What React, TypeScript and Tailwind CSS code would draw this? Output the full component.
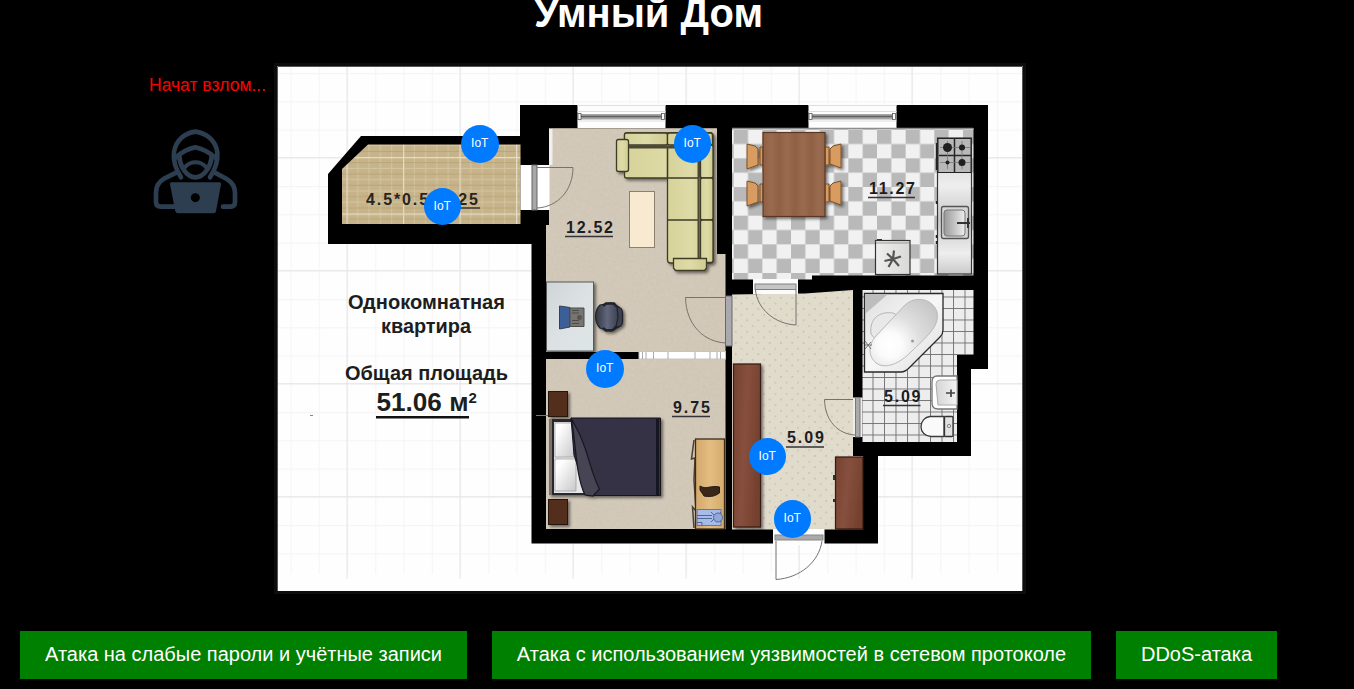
import type { ReactNode } from "react";

const BLACK = "#000";

const devices = [
  { id: 1, place: "left-[184px] top-[59px]" },
  { id: 2, place: "left-[146.5px] top-[121.5px]" },
  { id: 3, place: "left-[396.5px] top-[59px]" },
  { id: 4, place: "left-[309px] top-[284px]" },
  { id: 5, place: "left-[471.5px] top-[371.5px]" },
  { id: 6, place: "left-[496.5px] top-[434px]" },
];

const attacks = [
  { label: "Атака на слабые пароли и учётные записи", width: "w-[447px]" },
  { label: "Атака с использованием уязвимостей в сетевом протоколе", width: "w-[599px]" },
  { label: "DDoS-атака", width: "w-[161px]" },
];

function HackerIcon() {
  return (
    <svg className="block h-[87px] w-[85px]" viewBox="69 209 255 261" fill="none" stroke="#2c3e50" strokeWidth="14" strokeLinecap="round">
      <path d="M153 354C140 334 129 304 132 279C137 241 166 221 196 217C227 221 257 241 262 279C264 304 253 334 240 354" />
      <path d="M136 296C151 282 171 269 196 264C221 269 241 282 257 296" />
      <path d="M148 290C150 322 170 354 196 354C222 354 243 322 245 290" />
      <path d="M164 324C182 304 211 304 229 324" strokeWidth="12" />
      <path d="M140 339L104 357C87 367 78 380 78 398V428Q78 442 92 442H138" />
      <path d="M253 339L289 358C306 368 315 381 315 400V428Q315 442 302 442H279" />
      <path d="M124 369H269Q274 369 273 375L258 456Q257 462 251 462H143Q137 462 136 456L120 375Q119 369 124 369Z" fill="#2c3e50" stroke="none" />
      <circle cx="196" cy="415" r="13.5" fill={BLACK} stroke="none" />
    </svg>
  );
}

function Area({ x, y, w, children }: { x: number; y: number; w: number; children: ReactNode }) {
  return (
    <g>
      <text x={x} y={y} textLength={w} fontSize="16" fontWeight="700" fill="#1c1c22">{children}</text>
      <path d={`M${x - 1} ${y + 4}h${w + 1}`} stroke="#333338" strokeWidth="1.7" />
    </g>
  );
}

function Windows() {
  return (
    <g>
      {[577.5, 808.5].map((x) => (
        <g key={x}>
          <rect x={x} y="104" width="88" height="24" fill="#fdfdfd" />
          <path d={`M${x} 105.5h88M${x} 111.5h88M${x} 121h88`} stroke="#dedede" strokeWidth="1" />
          <rect x={x + 3} y="114" width="82" height="5.5" fill="#a5a5a5" />
          <path d={`M${x + 3} 116.5h82`} stroke="#606060" strokeWidth="1.5" />
          <rect x={x + 0.5} y="113.5" width="3" height="6" fill="#fff" stroke="#555" strokeWidth="0.8" />
          <rect x={x + 84} y="113.5" width="3" height="6" fill="#fff" stroke="#555" strokeWidth="0.8" />
        </g>
      ))}
    </g>
  );
}

function Doors() {
  return (
    <g fill="none" stroke="#77736c" strokeWidth="1">
      <rect x="520.5" y="165" width="29" height="45" fill="#fff" stroke="none" />
      <rect x="532" y="165" width="5" height="45" fill="#a8a8a8" stroke="#666" />
      <path d="M537 167.5H573C573 190 558 207 537 208" />
      <rect x="725.5" y="296" width="6.5" height="50" fill="#a9a9ae" stroke="#68686c" />
      <path d="M726 297.5H685.5C686 325 704 342 726 343" />
      <rect x="753" y="279" width="45" height="15" fill="#fbfbfb" stroke="none" />
      <rect x="755" y="284" width="41" height="5.5" fill="#c5c5c5" stroke="#808080" />
      <path d="M796 290V325C774 324 757 308 755.5 290" />
      <rect x="853" y="397.5" width="9.5" height="39.5" fill="#ededed" stroke="none" />
      <rect x="855.5" y="397.5" width="4.5" height="39.5" fill="#aaa" stroke="#777" />
      <path d="M853 399.5H824.5C825 421 838 434 855 435" />
      <rect x="773" y="529" width="51.5" height="16" fill="#fdfdfd" stroke="none" />
      <rect x="775" y="535" width="48" height="5" fill="#a9a9a9" stroke="#888" />
      <path d="M776 541V579.5C800 578 819 562 822 541" />
      <rect x="639" y="351.5" width="86.5" height="7.5" fill="#fff" stroke="#c8c4bd" />
      <path d="M642.5 352v7M646 352v7M653.5 352v7M668 352v7M695 352v7M710 352v7M717 352v7M720.5 352v7" stroke="#aaa" />
    </g>
  );
}

function Sofa() {
  return (
    <g fill="url(#sofa)" stroke="#3e3c27" strokeWidth="1.3" filter="url(#drop)">
      <rect x="624.5" y="133" width="88" height="45" rx="2" />
      <rect x="667.5" y="133" width="45.5" height="130" rx="3" />
      <path d="M667.5 133V178M667.5 178H713M667.5 220H713" fill="none" />
      <path d="M627 147H699V258" fill="none" strokeWidth="3" stroke="#4b4835" />
      <path d="M700 178V262M629 145H700" fill="none" stroke="#858060" />
      <rect x="624.5" y="133" width="43" height="12" rx="2" />
      <rect x="667.5" y="133" width="45" height="12" rx="2" />
      <rect x="700.5" y="145" width="12.5" height="33" rx="2" />
      <rect x="700.5" y="178" width="12.5" height="42" rx="2" />
      <rect x="700.5" y="220" width="12.5" height="42.5" rx="2" />
      <rect x="616.5" y="139.5" width="12" height="32" rx="2" />
      <path d="M673.5 258.5H706.5V268L704.5 270.5H675.5L673.5 268Z" />
    </g>
  );
}

function Office() {
  return (
    <g>
      <rect x="629.5" y="191.5" width="25" height="56" fill="#f7ead0" stroke="#8a8172" />
      <g filter="url(#drop)">
        <rect x="546.5" y="282" width="47" height="69" fill="url(#desk)" stroke="#565a5a" />
      </g>
      <path d="M559.5 306L570 307.5V327L559.5 329Z" fill="#3d5f98" stroke="#36424e" />
      <path d="M570 308H584V326.5H570Z" fill="#777572" stroke="#4e4d4b" />
      <path d="M572 310.5h7M572 313h7M572 320.5h7M572 323.5h7" stroke="#4c4c4b" />
      <circle cx="579.5" cy="317.5" r="2.5" fill="#575652" />
      <g filter="url(#drop)" stroke="#20232c" strokeWidth="1.2">
        <path d="M600 305L611 303L619 307V327L611 331L600 328C594 322 594 311 600 305Z" fill="url(#chair)" />
        <path d="M603 306L606 303.5H614L617 307M603 328L606 330.5L613 330L617 326" fill="none" strokeWidth="2.5" />
        <path d="M617 307C621 307 622.5 310 622.5 313V322C622.5 325 620 327 616 327L618 317Z" fill="#3c4150" />
      </g>
    </g>
  );
}

function Bedroom() {
  return (
    <g>
      <g fill="#532f1e" stroke="#281309" filter="url(#drop)">
        <rect x="548.5" y="391.5" width="19" height="25" />
        <rect x="548.5" y="499.5" width="19" height="25" />
      </g>
      <path d="M536 415.5h12" stroke="#777" />
      <g filter="url(#drop)">
        <rect x="549" y="419" width="112" height="76" fill="#29262f" />
        <rect x="549" y="419" width="3" height="76" fill="#77736b" />
        <rect x="554" y="422" width="34" height="71" fill="#e7e7e8" />
        <path d="M555 423H574V457H555Z" fill="url(#pillow)" stroke="#999" strokeWidth="0.7" />
        <path d="M555 459H576V491H555Z" fill="url(#pillow)" stroke="#999" strokeWidth="0.7" />
        <path d="M571 418H660.5V495.5H587L574 455Z" fill="#343244" stroke="#15131d" />
        <path d="M657.5 419V495" stroke="#191721" strokeWidth="3" />
        <path d="M571 418C576 438 575 475 585 495L593 496L599.5 489C591 474 588 450 578 431Z" fill="#464452" stroke="#191821" strokeWidth="1.2" />
      </g>
      <path d="M694 440L691.5 459L695 458L694 480L696 511L692.5 507L694 528" fill="none" stroke="#4a4030" strokeWidth="1.5" />
      <rect x="695.5" y="439" width="29" height="90" fill="url(#lightwood)" stroke="#3b2c18" strokeWidth="1.3" />
      <path d="M700 486C706 490 711 485 719.5 487V493C714 497 709 497 704 496L700 490Z" fill="#39281a" stroke="#241a11" />
      <rect x="697" y="509.5" width="24" height="16" fill="#a7bbeb" stroke="#6177a5" />
      <path d="M697 515.5H712M697 518.5H712M711 512L721 522M711 522L721 512M697 522.5H702V526" fill="none" stroke="#526792" />
      <circle cx="718" cy="517.5" r="4.5" fill="#91a8db" stroke="#526792" />
    </g>
  );
}

function Kitchen() {
  return (
    <g>
      <path d="M732 128H973.5V275.5H812V279.5H732Z" fill="url(#checker)" />
      <path d="M732 128.5H973" stroke="#8e8e8e" strokeWidth="1.5" />
      <g fill="#d89b60" stroke="#7a5028" filter="url(#drop)">
        {[144, 181].map((y) => (
          <g key={y}>
            <path d={`M747 ${y}L755 ${y + 2}L758 ${y + 5}V${y + 21}L747 ${y + 25}Z`} />
            <path d={`M760 ${y + 3}h3v18h-3Z`} />
            <path d={`M841 ${y}L833 ${y + 2}L830 ${y + 5}V${y + 20}L841 ${y + 24}Z`} />
            <path d={`M825 ${y + 3}h4v18h-4Z`} />
          </g>
        ))}
        <rect x="763" y="132.5" width="62" height="84" fill="url(#table)" stroke="#583722" strokeWidth="1.2" />
      </g>
      <rect x="937.5" y="138" width="34" height="136" fill="url(#steel)" stroke="#353535" strokeWidth="1.2" />
      <rect x="938" y="138.5" width="33" height="34" fill="#b8b8b8" stroke="#222" />
      <path d="M954.5 139v33M939 155.5h32" stroke="#252525" strokeWidth="1.5" />
      <path d="M940 147.5h30M940 162.5h30M947.5 141v28M962 141v28" stroke="#777" strokeWidth="0.8" />
      <g fill="#202020">
        <circle cx="947.5" cy="147.5" r="4.5" />
        <circle cx="962" cy="147.5" r="3" />
        <circle cx="947.5" cy="162.5" r="2" />
        <circle cx="962" cy="162.5" r="3.5" />
      </g>
      <rect x="941.5" y="206.5" width="27" height="32" rx="2" fill="#d5d5d5" stroke="#555" strokeWidth="1.3" />
      <rect x="944" y="210" width="21" height="26" rx="3" fill="url(#sink)" stroke="#777" />
      <path d="M957 223H970M968 218V228" stroke="#333" strokeWidth="2" />
      <path d="M936.5 143v27M936.5 201v3M936.5 235v3M936.5 241v3" stroke="#222" strokeWidth="1.5" />
      <rect x="875.5" y="240.5" width="34.5" height="34" fill="url(#fridge)" stroke="#333" strokeWidth="1.2" />
      <path d="M876 243h33" stroke="#999" />
      <path d="M877 239.5h5" stroke="#333" />
      <path d="M893 259L894 250.500M893 259L901 256.500M893 259L899 266M893 259L888.500 267M893 259L884.500 261M893 259L887 253.500" stroke="#555" strokeWidth="2.200" />
    </g>
  );
}

function Bathroom() {
  return (
    <g>
      <path d="M862.5 290H973.5V355H957V442H862.5Z" fill="url(#tiles)" />
      <path d="M864.5 293.5H943V330Q943 334 940 337L909 368Q905 372 901 372H864.5Z" fill="url(#bath)" stroke="#292929" strokeWidth="1.3" />
      <path d="M865 294H888L865 314Z" fill="#bdbdbd" />
      <path d="M871 334C869 318 880 311 893 313L901 317L876 340Z" fill="#e8e8e8" stroke="#b5b5b5" />
      <path d="M876 336L905 305C916 295 933 299 937 312C940 327 926 337 911 352C900 363 886 370 876 363C868 356 868 345 876 336Z" fill="url(#basin)" stroke="#b9b9b9" />
      <circle cx="912.5" cy="341" r="1.5" fill="#999" />
      <path d="M865 341l6 8M865 349l6-7M865 345h7" stroke="#666" strokeWidth="0.9" />
      <path d="M957 376H937Q932 376 932 382V403Q932 409 938 409H957Z" fill="#fff" stroke="#777" strokeWidth="1.3" />
      <path d="M957 380H940Q936 380 936 384L938 405H957Z" fill="url(#sink2)" stroke="#aaa" />
      <path d="M946 393H955M951 389.5V397" stroke="#444" strokeWidth="1.7" />
      <path d="M944 416.5H930C925 417 921 421 921 427C921 432 925 436 931 436.5H944Z" fill="#fafafa" stroke="#3c3c3c" strokeWidth="1.3" />
      <rect x="944.5" y="416.5" width="8.500" height="20" rx="1" fill="#e2e2e2" stroke="#333" strokeWidth="1.3" />
      <circle cx="949" cy="426" r="1.7" fill="none" stroke="#888" />
    </g>
  );
}

function FloorPlan() {
  return (
    <svg className="block h-full w-full" viewBox="277 66 746 525" fontFamily="'Liberation Sans', Arial, sans-serif">
      <defs>
        <pattern id="minor" x="290.5" y="73" width="28.25" height="28.25" patternUnits="userSpaceOnUse">
          <path d="M0 .5H28.25M.5 0V28.25" stroke="#f5f5f5" strokeWidth="1.2" />
        </pattern>
        <pattern id="major" x="346.5" y="157.2" width="113" height="113" patternUnits="userSpaceOnUse">
          <path d="M0 .5H113M.5 0V113" stroke="#e5e5e5" strokeWidth="1" />
        </pattern>
        <pattern id="balcony" x="346.5" y="157" width="56.5" height="56.5" patternUnits="userSpaceOnUse">
          <rect width="56.5" height="56.5" fill="#c8b48a" />
          <path d="M0 11.3H56.5M0 22.6H56.5M0 33.9H56.5M0 45.2H56.5M11.3 0V56.5M22.6 0V56.5M33.9 0V56.5M45.2 0V56.5" stroke="#d5c7a3" strokeWidth="1" />
          <path d="M0 5.6H56.5M0 17H56.5M0 28.2H56.5M0 39.5H56.5M0 51H56.5" stroke="#b7a070" strokeWidth="0.8" />
          <path d="M0 .5H56.5M.5 0V56.5" stroke="#e8dfc9" strokeWidth="1.5" />
        </pattern>
        <pattern id="checker" x="733.7" y="129.7" width="28.66" height="28.66" patternUnits="userSpaceOnUse">
          <rect width="28.66" height="28.66" fill="#f1f1f1" />
          <path d="M0 0H14.33V14.33H0ZM14.33 14.33H28.66V28.66H14.33Z" fill="#b9b9b9" />
        </pattern>
        <pattern id="dots" x="733" y="295" width="11.3" height="11.3" patternUnits="userSpaceOnUse">
          <rect width="11.3" height="11.3" fill="#e1dbcc" />
          <path d="M2 2h1.500v1.500H2zM7.700 7.700h1.500v1.500H7.700z" fill="#c3bcac" />
        </pattern>
        <pattern id="tiles" x="872.5" y="296.5" width="11.5" height="11.5" patternUnits="userSpaceOnUse">
          <rect width="11.5" height="11.5" fill="#ededed" />
          <path d="M0 .5H11.500M.5 0V11.500" stroke="#6c6c6c" strokeWidth="0.9" />
        </pattern>
        <linearGradient id="sofa"><stop stopColor="#d6d299" /><stop offset="0.5" stopColor="#dfdba7" /><stop offset="1" stopColor="#d0cb91" /></linearGradient>
        <linearGradient id="desk" x2="1" y2="1"><stop stopColor="#cfd4d6" /><stop offset="0.5" stopColor="#dce2e4" /><stop offset="1" stopColor="#dee5e6" /></linearGradient>
        <linearGradient id="chair"><stop stopColor="#313542" /><stop offset="0.5" stopColor="#61677a" /><stop offset="1" stopColor="#383d4d" /></linearGradient>
        <linearGradient id="pillow" x2="1" y2="1"><stop offset="0.2" stopColor="#fff" /><stop offset="1" stopColor="#c8c8ca" /></linearGradient>
        <linearGradient id="lightwood"><stop stopColor="#d4a86c" /><stop offset="0.5" stopColor="#e3bd82" /><stop offset="1" stopColor="#d5aa6d" /></linearGradient>
        <linearGradient id="wood" x2="1" y2="0.300"><stop stopColor="#74412f" /><stop offset="0.5" stopColor="#87503e" /><stop offset="1" stopColor="#75412f" /></linearGradient>
        <linearGradient id="table" x1="763" x2="771" y1="0" y2="0" gradientUnits="userSpaceOnUse" spreadMethod="reflect"><stop stopColor="#8f6045" /><stop offset="1" stopColor="#9b6b50" /></linearGradient>
        <linearGradient id="steel" x2="0" y2="1"><stop stopColor="#c8c8c8" /><stop offset="0.35" stopColor="#eee" /><stop offset="0.6" stopColor="#c8c8c8" /><stop offset="0.85" stopColor="#eee" /><stop offset="1" stopColor="#cacaca" /></linearGradient>
        <linearGradient id="sink"><stop stopColor="#999" /><stop offset="1" stopColor="#eee" /></linearGradient>
        <linearGradient id="sink2"><stop stopColor="#d5d5d5" /><stop offset="1" stopColor="#f4f4f4" /></linearGradient>
        <linearGradient id="fridge"><stop stopColor="#eeefed" /><stop offset="1" stopColor="#d9dad7" /></linearGradient>
        <linearGradient id="bath" x2="1" y2="1"><stop stopColor="#dedede" /><stop offset="0.5" stopColor="#f7f7f7" /><stop offset="1" stopColor="#dcdcdc" /></linearGradient>
        <radialGradient id="basin" cx="890" cy="345" r="62" gradientUnits="userSpaceOnUse"><stop stopColor="#fff" /><stop offset="0.2" stopColor="#fbfbfb" /><stop offset="0.5" stopColor="#dedede" /><stop offset="1" stopColor="#c2c2c2" /></radialGradient>
        <filter id="drop" x="-20%" y="-20%" width="150%" height="150%"><feDropShadow dx="2" dy="2" stdDeviation="1.5" floodOpacity="0.5" /></filter>
        <filter id="grain"><feTurbulence type="fractalNoise" baseFrequency="0.35" numOctaves="2" /><feColorMatrix values="0 0 0 0 .45  0 0 0 0 .4  0 0 0 0 .28  .8 0 0 0 -.2" /><feComposite in2="SourceGraphic" operator="in" /></filter>
      </defs>
      <rect x="277" y="66" width="746" height="525" fill="#fefefe" />
      <rect x="277" y="66" width="746" height="508" fill="url(#minor)" />
      <rect x="277" y="66" width="746" height="513" fill="url(#major)" />
      <path d="M328 174L361 136H520V105H988V369H971V456H878V543.5H531.5V244H328Z" fill={BLACK} />
      <path d="M342 169L368 144.5H520.5V224H342Z" fill="url(#balcony)" />
      <path d="M549 128H717V254H725.5V352H546V225H549Z" fill="#d4cabb" />
      <path d="M546 359H725.5V529H546Z" fill="#d4cabb" />
      <path d="M549 128H717V254H725.5V352H546V225H549ZM546 359H725.5V529H546ZM342 169L368 144.5H520.5V224H342Z" filter="url(#grain)" opacity="0.3" />
      <path d="M549 128h3.500v37H549z" fill="#efefef" />
      <path d="M549 128.5H717" stroke="#a59c90" />
      <path d="M732 294.5L805 293.5L853 290V456H863V529.5H732Z" fill="url(#dots)" />
      <Windows />
      <Kitchen />
      <Doors />
      <Sofa />
      <Office />
      <Bedroom />
      <g stroke="#351a12" strokeWidth="1.2" fill="url(#wood)" filter="url(#drop)">
        <rect x="733.5" y="364" width="27" height="163" />
        <rect x="835.5" y="457" width="27.5" height="72" />
      </g>
      <path d="M834 475v5M834 499v3" stroke="#333" strokeWidth="2" />
      <Bathroom />
      <text x="366" y="204.5" textLength="112" fontSize="16" fontWeight="700" fill="#29241d">4.5*0.5=2.25</text>
      <path d="M440 208H480" stroke="#38332b" strokeWidth="1.7" />
      <Area x={566} y={232.5} w={47}>12.52</Area>
      <Area x={869} y={193.5} w={46}>11.27</Area>
      <Area x={673} y={412.5} w={37}>9.75</Area>
      <Area x={787} y={443} w={37}>5.09</Area>
      <Area x={884} y={401.5} w={36.5}>5.09</Area>
      <g fontWeight="700" fill="#1d1d1d">
        <text x="348" y="309" textLength="157" lengthAdjust="spacingAndGlyphs" fontSize="19.5">Однокомнатная</text>
        <text x="381" y="332.5" textLength="90" lengthAdjust="spacingAndGlyphs" fontSize="19.5">квартира</text>
        <text x="345" y="380" textLength="163" lengthAdjust="spacingAndGlyphs" fontSize="19.5">Общая площадь</text>
        <text x="376.5" y="411" textLength="92" lengthAdjust="spacingAndGlyphs" fontSize="25">51.06 м</text>
        <text x="468.5" y="402.5" fontSize="15">2</text>
      </g>
      <path d="M376 417.3H469" stroke="#111" strokeWidth="2.6" />
      <path d="M310 415.5h3" stroke="#888" />
      <path d="M277.5 591V66.5H1022.5V591" fill="none" stroke="#555" strokeWidth="1" />
    </svg>
  );
}

export default function App() {
  return (
    <div className="flex h-[689px] w-full flex-col overflow-hidden bg-black font-['Liberation_Sans',Arial,sans-serif] text-white">
      <header className="flex h-[63px] shrink-0 justify-center pr-[57px]">
        <h1 className="-mt-2.5 text-[40px] leading-[46px] font-bold whitespace-nowrap">Умный Дом</h1>
      </header>
      <main className="flex h-[531px] shrink-0">
        <aside className="w-[274px] shrink-0 pt-3 pl-[149px]">
          <p className="text-[17.5px] leading-5 whitespace-nowrap text-[#f00]">Начат взлом...</p>
          <div className="mt-[34px] ml-1">
            <HackerIcon />
          </div>
        </aside>
        <section className="relative h-[531px] w-[752px] shrink-0 border-[3px] border-[#0d0d0d]">
          <FloorPlan />
          {devices.map((device) => (
            <button key={device.id} className={`absolute flex size-[37.5px] items-center justify-center rounded-full bg-[#007bff] pb-px text-[12px] leading-none text-white ${device.place}`}>
              IoT
            </button>
          ))}
        </section>
      </main>
      <nav className="mt-[37px] flex shrink-0 gap-[25px] pl-5">
        {attacks.map((attack) => (
          <button key={attack.label} className={`h-12 shrink-0 bg-[#008000] pb-0.5 text-[20px] leading-none whitespace-nowrap ${attack.width}`}>
            {attack.label}
          </button>
        ))}
      </nav>
    </div>
  );
}
